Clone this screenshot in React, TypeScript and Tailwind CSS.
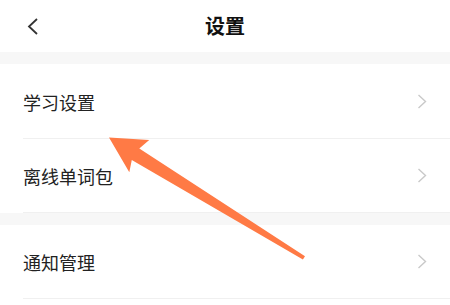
const rows = [
  { label: '学习设置', group: 0 },
  { label: '离线单词包', group: 0 },
  { label: '通知管理', group: 1 },
]

function Chevron() {
  return (
    <svg width="10" height="15" viewBox="0 0 10 15" className="shrink-0">
      <path d="M1.5 1 L8.5 7.5 L1.5 14" fill="none" stroke="#c9c9c9" strokeWidth="1.4" />
    </svg>
  )
}

function Row({ label }: { label: string }) {
  return (
    <div className="flex h-[74px] items-center justify-between border-b border-[#f0f0f0] ml-[23px] pr-[23px]">
      <span className="text-[18px] leading-none text-[#222]">{label}</span>
      <Chevron />
    </div>
  )
}

export default function App() {
  return (
    <div
      className="relative h-[305px] w-[450px] overflow-hidden bg-white"
      style={{ fontFamily: '"Noto Sans CJK SC", "Noto Sans", sans-serif' }}
    >
      {/* Header */}
      <div className="relative flex h-[52px] items-center justify-center">
        <svg width="12" height="17" viewBox="0 0 12 17" className="absolute left-[27px] top-[18px]">
          <path d="M10 1 L2 8.5 L10 16" fill="none" stroke="#333" strokeWidth="1.8" />
        </svg>
        <span className="text-[20px] font-bold leading-none text-[#111]">设置</span>
      </div>

      <div className="h-[12px] bg-[#f7f7f7]" />
      <div className="pt-px">
        <Row label={rows[0].label} />
        <Row label={rows[1].label} />
      </div>
      <div className="h-[12px] bg-[#f7f7f7]" />
      <Row label={rows[2].label} />

      {/* Arrow annotation */}
      <svg width="450" height="305" viewBox="0 0 450 305" className="pointer-events-none absolute inset-0">
        <polygon
          points="109,137.5 149.2,139.9 139.3,148.4 305,256.2 302.9,259.6 131.8,160.1 129.3,172.3"
          fill="#ff7a45"
        />
      </svg>
    </div>
  )
}
